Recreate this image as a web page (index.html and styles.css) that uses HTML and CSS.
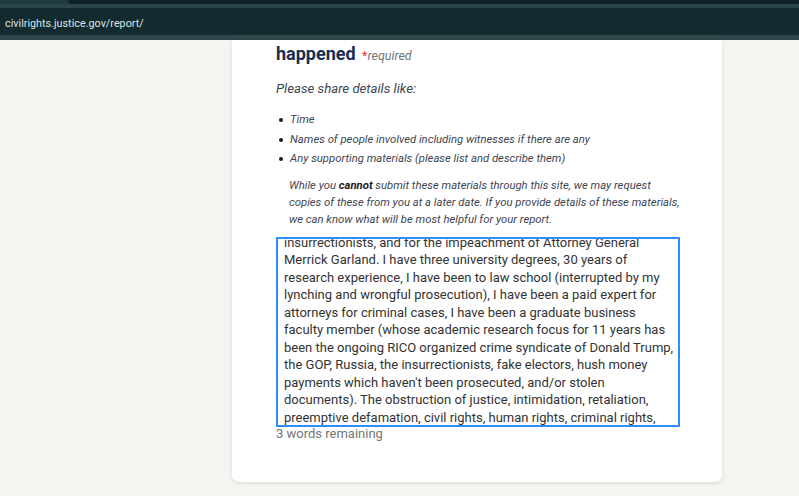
FILE: index.html
```html
<!DOCTYPE html>
<html lang="en">
<head>
<meta charset="utf-8">
<title>Civil Rights Report</title>
<link rel="stylesheet" href="styles.css">
</head>
<body>
<header class="chrome">
  <div class="tabstrip"><div class="tabstrip-gap"></div><div class="tabstrip-tab"></div></div>
  <div class="band"></div>
  <div class="urlbar"><span class="url">civilrights.justice.gov/report/</span></div>
  <div class="band band-bottom"></div>
</header>
<main class="page">
  <section class="card">
    <h2 class="q-title">happened <span class="req"><span class="star">*</span>required</span></h2>
    <p class="hint">Please share details like:</p>
    <ul class="details">
      <li>Time</li>
      <li>Names of people involved including witnesses if there are any</li>
      <li>Any supporting materials (please list and describe them)</li>
    </ul>
    <p class="note"><span>While you <b>cannot</b> submit these materials through this site, we may request</span><span>copies of these from you at a later date. If you provide details of these materials,</span><span>we can know what will be most helpful for your report.</span></p>
    <div class="textarea" role="textbox" aria-multiline="true">
      <div class="ta-lines">
        <span>insurrectionists, and for the impeachment of Attorney General</span>
        <span>Merrick Garland. I have three university degrees, 30 years of</span>
        <span>research experience, I have been to law school (interrupted by my</span>
        <span>lynching and wrongful prosecution), I have been a paid expert for</span>
        <span>attorneys for criminal cases, I have been a graduate business</span>
        <span>faculty member (whose academic research focus for 11 years has</span>
        <span>been the ongoing RICO organized crime syndicate of Donald Trump,</span>
        <span>the GOP, Russia, the insurrectionists, fake electors, hush money</span>
        <span>payments which haven't been prosecuted, and/or stolen</span>
        <span>documents). The obstruction of justice, intimidation, retaliation,</span>
        <span>preemptive defamation, civil rights, human rights, criminal rights,</span>
      </div>
    </div>
    <div class="counter">3 words remaining</div>
  </section>
</main>
</body>
</html>
```
FILE: styles.css
```css
html, body {
  margin: 0;
  padding: 0;
  height: 100%;
  overflow: hidden;
}
body {
  background: #f4f4f0;
  font-family: Roboto, "Liberation Sans", sans-serif;
}
.chrome {
  display: flex;
  flex-direction: column;
  height: 40px;
}
.tabstrip {
  display: flex;
  height: 4px;
  background: #1f3b3f;
}
.tabstrip-gap { width: 68px; }
.tabstrip-tab {
  flex: 1;
  background: #0c2226;
  border-bottom-left-radius: 4px;
}
.band {
  height: 4px;
  background: #2a4548;
}
.band-bottom { height: 5px; background: #2d474a; }
.urlbar {
  height: 27px;
  box-sizing: border-box;
  padding: 3px 0 0 5px;
  background: #132a2e;
  display: flex;
  align-items: center;
}
.url {
  color: #dbe3e3;
  font-size: 10.8px;
}
.page {
  display: flex;
  padding-left: 232px;
}
.card {
  width: 490px;
  box-sizing: border-box;
  background: #fff;
  padding: 0 42px 0 44px;
  height: 442px;
  border-radius: 0 0 7px 7px;
  box-shadow: 0 1px 4px rgba(0,0,0,0.12);
}
.q-title {
  margin: 0;
  padding-top: 2px;
  font-size: 18px;
  line-height: 24px;
  font-weight: 700;
  color: #162e51;
}
.req {
  font-size: 12.5px;
  font-weight: 400;
  font-style: italic;
  color: #71767a;
  margin-left: 2px;
}
.star { color: #d83933; font-style: normal; }
.hint {
  margin: 13px 0 0;
  font-size: 13.2px;
  line-height: 16px;
  font-style: italic;
  color: #3d4551;
}
.details {
  list-style: none;
  margin: 13px 0 0;
  padding: 0 0 0 3px;
  font-size: 11.3px;
  line-height: 19.7px;
  font-style: italic;
  color: #3d4551;
}
.details li {
  display: flex;
  align-items: center;
  gap: 7px;
}
.details li::before {
  content: "";
  width: 4px;
  height: 4px;
  border-radius: 50%;
  background: #1b1b1b;
  flex: none;
}
.note {
  display: flex;
  flex-direction: column;
  margin: 9px 0 0 13px;
  font-size: 11.3px;
  line-height: 16.8px;
  font-style: italic;
  color: #3d4551;
  white-space: nowrap;
}
.note b { font-weight: 700; color: #1b1b1b; }
.textarea {
  margin-top: 8px;
  height: 186px;
  border: 2px solid #2e8eff;
  overflow: hidden;
  padding: 0 6px;
}
.ta-lines {
  display: flex;
  flex-direction: column;
  margin-top: -5px;
  font-size: 13px;
  line-height: 17.55px;
  color: #333333;
  white-space: nowrap;
}
.counter {
  font-size: 13px;
  line-height: 14px;
  color: #757575;
}
```
